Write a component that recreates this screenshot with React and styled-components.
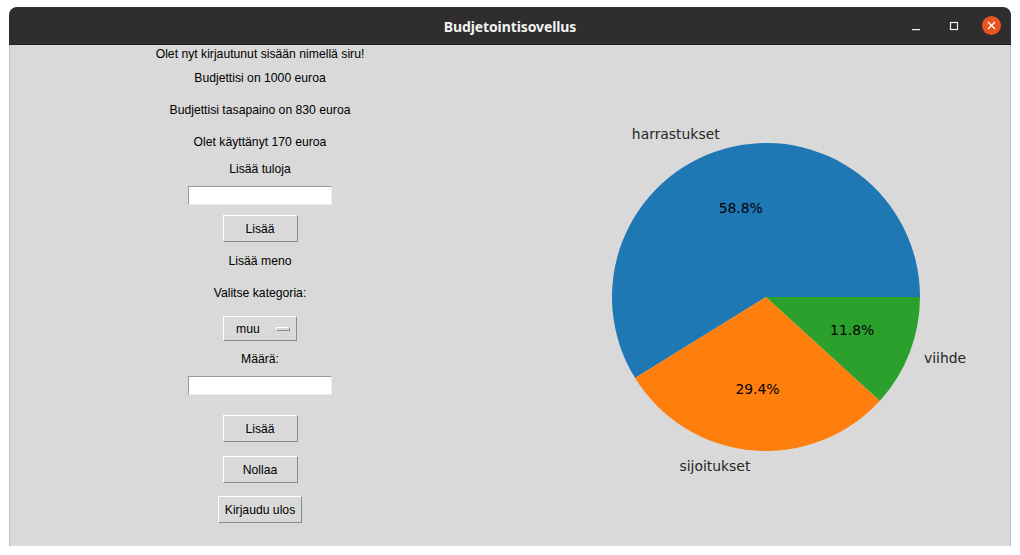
import React from "react";
import styled, { createGlobalStyle } from "styled-components";

const GlobalStyle = createGlobalStyle`
	html, body {
		margin: 0;
		padding: 0;
		background: #ffffff;
	}
`;

const Page = styled.div`
	width: 1020px;
	height: 555px;
	padding: 7px 9px 0 9px;
	box-sizing: border-box;
`;

const Window = styled.div`
	width: 1002px;
	height: 539px;
	display: flex;
	flex-direction: column;
	border-radius: 8px 8px 0 0;
	overflow: hidden;
	box-sizing: border-box;
`;

const TitleBar = styled.div`
	height: 38px;
	flex: none;
	background: #2f2d2d;
	border-bottom: 1px solid #1e1d1d;
	box-sizing: border-box;
	display: flex;
	align-items: center;
	justify-content: center;
	position: relative;
`;

const Title = styled.div`
	color: #f2f2f2;
	font-family: "Noto Sans", "DejaVu Sans", sans-serif;
	font-weight: 700;
	font-size: 14px;
	letter-spacing: -0.1px;
	margin-top: 1px;
`;

const Controls = styled.div`
	position: absolute;
	right: 10px;
	top: 0;
	height: 100%;
	display: flex;
	align-items: center;
	gap: 18px;
`;

const ControlIcon = styled.span`
	width: 20px;
	height: 20px;
	display: flex;
	align-items: center;
	justify-content: center;
`;

const CloseIcon = styled.span`
	width: 19px;
	height: 19px;
	border-radius: 50%;
	background: #e95420;
	display: flex;
	align-items: center;
	justify-content: center;
`;

const Content = styled.div`
	flex: 1;
	display: flex;
	background: #d9d9d9;
	border: 1px solid #bdbdbd;
	border-top: none;
`;

const LeftColumn = styled.div`
	width: 500px;
	flex: none;
	display: flex;
	flex-direction: column;
	align-items: center;
	font-family: "Liberation Sans", Arial, sans-serif;
	font-size: 12.2px;
	color: #000;
`;

const Label = styled.div`
	height: 17px;
	line-height: 19px;
	margin-top: ${(p) => p.$gap || 0}px;
	white-space: nowrap;
`;

const Entry = styled.div`
	width: 144px;
	height: 19px;
	box-sizing: border-box;
	background: #ffffff;
	border-top: 1px solid #9a9a9a;
	border-left: 1px solid #9a9a9a;
	border-right: 1px solid #ececec;
	border-bottom: 1px solid #ececec;
	margin-top: ${(p) => p.$gap || 0}px;
`;

const Button = styled.div`
	width: ${(p) => p.$width || 75}px;
	height: 27px;
	box-sizing: border-box;
	background: #d9d9d9;
	border-top: 1px solid #ffffff;
	border-left: 1px solid #ffffff;
	border-right: 1px solid #8c8c8c;
	border-bottom: 1px solid #8c8c8c;
	display: flex;
	align-items: center;
	justify-content: center;
	margin-top: ${(p) => p.$gap || 0}px;
`;

const OptionMenu = styled(Button)`
	width: 74px;
	height: 25px;
	justify-content: flex-start;
	padding-left: 12px;
	gap: 16px;
`;

const Indicator = styled.span`
	width: 14px;
	height: 4px;
	box-sizing: border-box;
	border-top: 1px solid #ffffff;
	border-left: 1px solid #ffffff;
	border-right: 1px solid #8c8c8c;
	border-bottom: 1px solid #8c8c8c;
`;

const ChartArea = styled.div`
	flex: 1;
`;

const cx = 256;
const cy = 252;
const r = 154;

const slices = [
	{ label: "harrastukset", value: 100, color: "#1f77b4" },
	{ label: "sijoitukset", value: 50, color: "#ff7f0e" },
	{ label: "viihde", value: 20, color: "#2ca02c" },
];

function PieChart() {
	const total = slices.reduce((s, d) => s + d.value, 0);
	let start = 0;
	return (
		<svg width="500" height="500" viewBox="0 0 500 500">
			{slices.map((d) => {
				const a0 = start;
				const a1 = start + (d.value / total) * 360;
				start = a1;
				const rad = (a) => (a * Math.PI) / 180;
				const x0 = cx + r * Math.cos(rad(a0));
				const y0 = cy - r * Math.sin(rad(a0));
				const x1 = cx + r * Math.cos(rad(a1));
				const y1 = cy - r * Math.sin(rad(a1));
				const large = a1 - a0 > 180 ? 1 : 0;
				const mid = rad((a0 + a1) / 2);
				const lx = cx + 1.1 * r * Math.cos(mid);
				const ly = cy - 1.1 * r * Math.sin(mid);
				const px = cx + 0.6 * r * Math.cos(mid);
				const py = cy - 0.6 * r * Math.sin(mid);
				return (
					<g key={d.label}>
						<path
							d={`M ${cx} ${cy} L ${x0} ${y0} A ${r} ${r} 0 ${large} 0 ${x1} ${y1} Z`}
							fill={d.color}
						/>
						<text
							x={lx}
							y={ly}
							textAnchor={lx < cx ? "end" : "start"}
							dominantBaseline="central"
							fontFamily="DejaVu Sans, sans-serif"
							fontSize="13.9"
							fill="#262626"
						>
							{d.label}
						</text>
						<text
							x={px}
							y={py}
							textAnchor="middle"
							dominantBaseline="central"
							fontFamily="DejaVu Sans, sans-serif"
							fontSize="13.9"
							fill="#000"
						>
							{((d.value / total) * 100).toFixed(1)}%
						</text>
					</g>
				);
			})}
		</svg>
	);
}

export default function App() {
	return (
		<>
			<GlobalStyle />
			<Page>
				<Window>
					<TitleBar>
						<Title>Budjetointisovellus</Title>
						<Controls>
							<ControlIcon>
								<svg width="10" height="10" viewBox="0 0 10 10">
									<rect x="1" y="8" width="8" height="1.2" fill="#f2f2f2" />
								</svg>
							</ControlIcon>
							<ControlIcon>
								<svg width="10" height="10" viewBox="0 0 10 10">
									<rect x="1.5" y="1.5" width="7" height="7" fill="none" stroke="#f2f2f2" strokeWidth="1.2" />
								</svg>
							</ControlIcon>
							<CloseIcon>
								<svg width="9" height="9" viewBox="0 0 9 9">
									<path d="M1 1 L8 8 M8 1 L1 8" stroke="#fff" strokeWidth="1.4" />
								</svg>
							</CloseIcon>
						</Controls>
					</TitleBar>
					<Content>
						<LeftColumn>
							<Label>Olet nyt kirjautunut sisään nimellä siru!</Label>
							<Label $gap={7}>Budjettisi on 1000 euroa</Label>
							<Label $gap={15}>Budjettisi tasapaino on 830 euroa</Label>
							<Label $gap={15}>Olet käyttänyt 170 euroa</Label>
							<Label $gap={10}>Lisää tuloja</Label>
							<Entry $gap={9} />
							<Button $gap={10}>Lisää</Button>
							<Label $gap={10}>Lisää meno</Label>
							<Label $gap={15}>Valitse kategoria:</Label>
							<OptionMenu $gap={15}>
								<span>muu</span>
								<Indicator />
							</OptionMenu>
							<Label $gap={9}>Määrä:</Label>
							<Entry $gap={9} />
							<Button $gap={20}>Lisää</Button>
							<Button $gap={14}>Nollaa</Button>
							<Button $gap={13} $width={84}>Kirjaudu ulos</Button>
						</LeftColumn>
						<ChartArea>
							<PieChart />
						</ChartArea>
					</Content>
				</Window>
			</Page>
		</>
	);
}
